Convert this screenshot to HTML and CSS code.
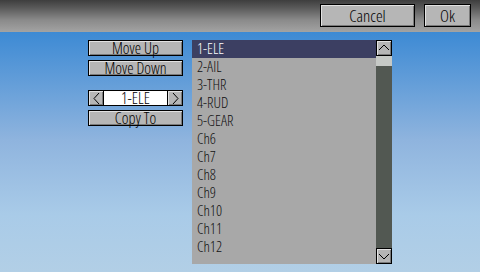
FILE: index.html
```html
<!DOCTYPE html>
<html>
<head>
<meta charset="utf-8">
<link rel="stylesheet" href="styles.css">
</head>
<body>
<div class="screen">
  <div class="header">
    <div class="btn btn-cancel">Cancel</div>
    <div class="btn btn-ok">Ok</div>
  </div>
  <div class="main">
    <div class="side">
      <div class="btn side-btn">Move Up</div>
      <div class="btn side-btn gap-s">Move Down</div>
      <div class="selector">
        <div class="btn arrow"><svg width="9" height="13" viewBox="0 0 9 13"><path d="M7 1 L2 6.5 L7 12" fill="none" stroke="#000" stroke-width="1"/></svg></div>
        <div class="field">1-ELE</div>
        <div class="btn arrow"><svg width="9" height="13" viewBox="0 0 9 13"><path d="M2 1 L7 6.5 L2 12" fill="none" stroke="#000" stroke-width="1"/></svg></div>
      </div>
      <div class="btn side-btn gap-s">Copy To</div>
    </div>
    <div class="listbox">
      <div class="items">
        <div class="item sel">1-ELE</div>
        <div class="item">2-AIL</div>
        <div class="item">3-THR</div>
        <div class="item">4-RUD</div>
        <div class="item">5-GEAR</div>
        <div class="item">Ch6</div>
        <div class="item">Ch7</div>
        <div class="item">Ch8</div>
        <div class="item">Ch9</div>
        <div class="item">Ch10</div>
        <div class="item">Ch11</div>
        <div class="item">Ch12</div>
      </div>
      <div class="scroll">
        <div class="sbtn"><svg width="14" height="14" viewBox="0 0 14 14"><path d="M2 9 L7 4 L12 9" fill="none" stroke="#000" stroke-width="1"/></svg></div>
        <div class="thumb"></div>
        <div class="track"></div>
        <div class="sbtn"><svg width="14" height="14" viewBox="0 0 14 14"><path d="M2 5 L7 10 L12 5" fill="none" stroke="#000" stroke-width="1"/></svg></div>
      </div>
    </div>
  </div>
</div>
</body>
</html>
```
FILE: styles.css
```css
* { box-sizing: border-box; }
html, body { margin: 0; padding: 0; }
body {
  width: 480px;
  height: 272px;
  overflow: hidden;
  font-family: "Open Sans", "DejaVu Sans", sans-serif;
  font-stretch: 75%;
  font-weight: 300;
  font-size: 15px;
  color: #000;
}
.screen {
  width: 480px;
  height: 272px;
  background: linear-gradient(to bottom, #3d8ad4 32px, #8fb4de 140px, #a9cbe8 215px, #b2cfe6 272px);
}
.header {
  height: 32px;
  background: linear-gradient(to bottom, #3e3e3e 0px, #5a5a5a 8px, #8a8a8a 20px, #a3a3a3 32px);
  display: flex;
  justify-content: flex-end;
  align-items: flex-start;
  padding-top: 4px;
  padding-right: 9px;
  gap: 9px;
}
.btn {
  background: #b6b6b6;
  border: 1px solid #000;
  box-shadow: inset 1px 1px 0 #e2e2e2, inset -1px -1px 0 #7a7a7a;
  display: flex;
  align-items: center;
  justify-content: center;
  line-height: 1;
}
.btn-cancel { width: 95px; height: 23px; font-size: 17px; }
.btn-ok { width: 47px; height: 23px; font-size: 17px; }
.main {
  display: flex;
  padding-top: 8px;
  padding-left: 88px;
  gap: 9px;
}
.side {
  width: 95px;
  display: flex;
  flex-direction: column;
}
.side-btn { height: 16px; font-size: 16px; }
.gap-s { margin-top: 4px; }
.selector {
  display: flex;
  height: 16px;
  margin-top: 14px;
}
.arrow { width: 16px; height: 16px; }
.field {
  flex: 1;
  background: #fff;
  border: 1px solid #000;
  border-left: none;
  border-right: none;
  display: flex;
  align-items: center;
  justify-content: center;
  font-size: 16px;
  line-height: 1;
}
.listbox {
  display: flex;
  width: 200px;
  height: 224px;
  background: #a8a8a8;
}
.items { flex: 1; }
.item {
  height: 18px;
  line-height: 17px;
  padding-left: 5px;
  font-size: 15px;
  color: #111;
}
.item.sel { background: #3c3f62; color: #fff; }
.scroll {
  width: 16px;
  display: flex;
  flex-direction: column;
  background: #525852;
}
.sbtn {
  width: 16px;
  height: 16px;
  background: #b6b6b6;
  border: 1px solid #000;
  box-shadow: inset 1px 1px 0 #e2e2e2, inset -1px -1px 0 #7a7a7a;
  display: flex;
  align-items: center;
  justify-content: center;
}
.thumb { height: 10px; background: #c6c9c6; }
.track { flex: 1; }
```
